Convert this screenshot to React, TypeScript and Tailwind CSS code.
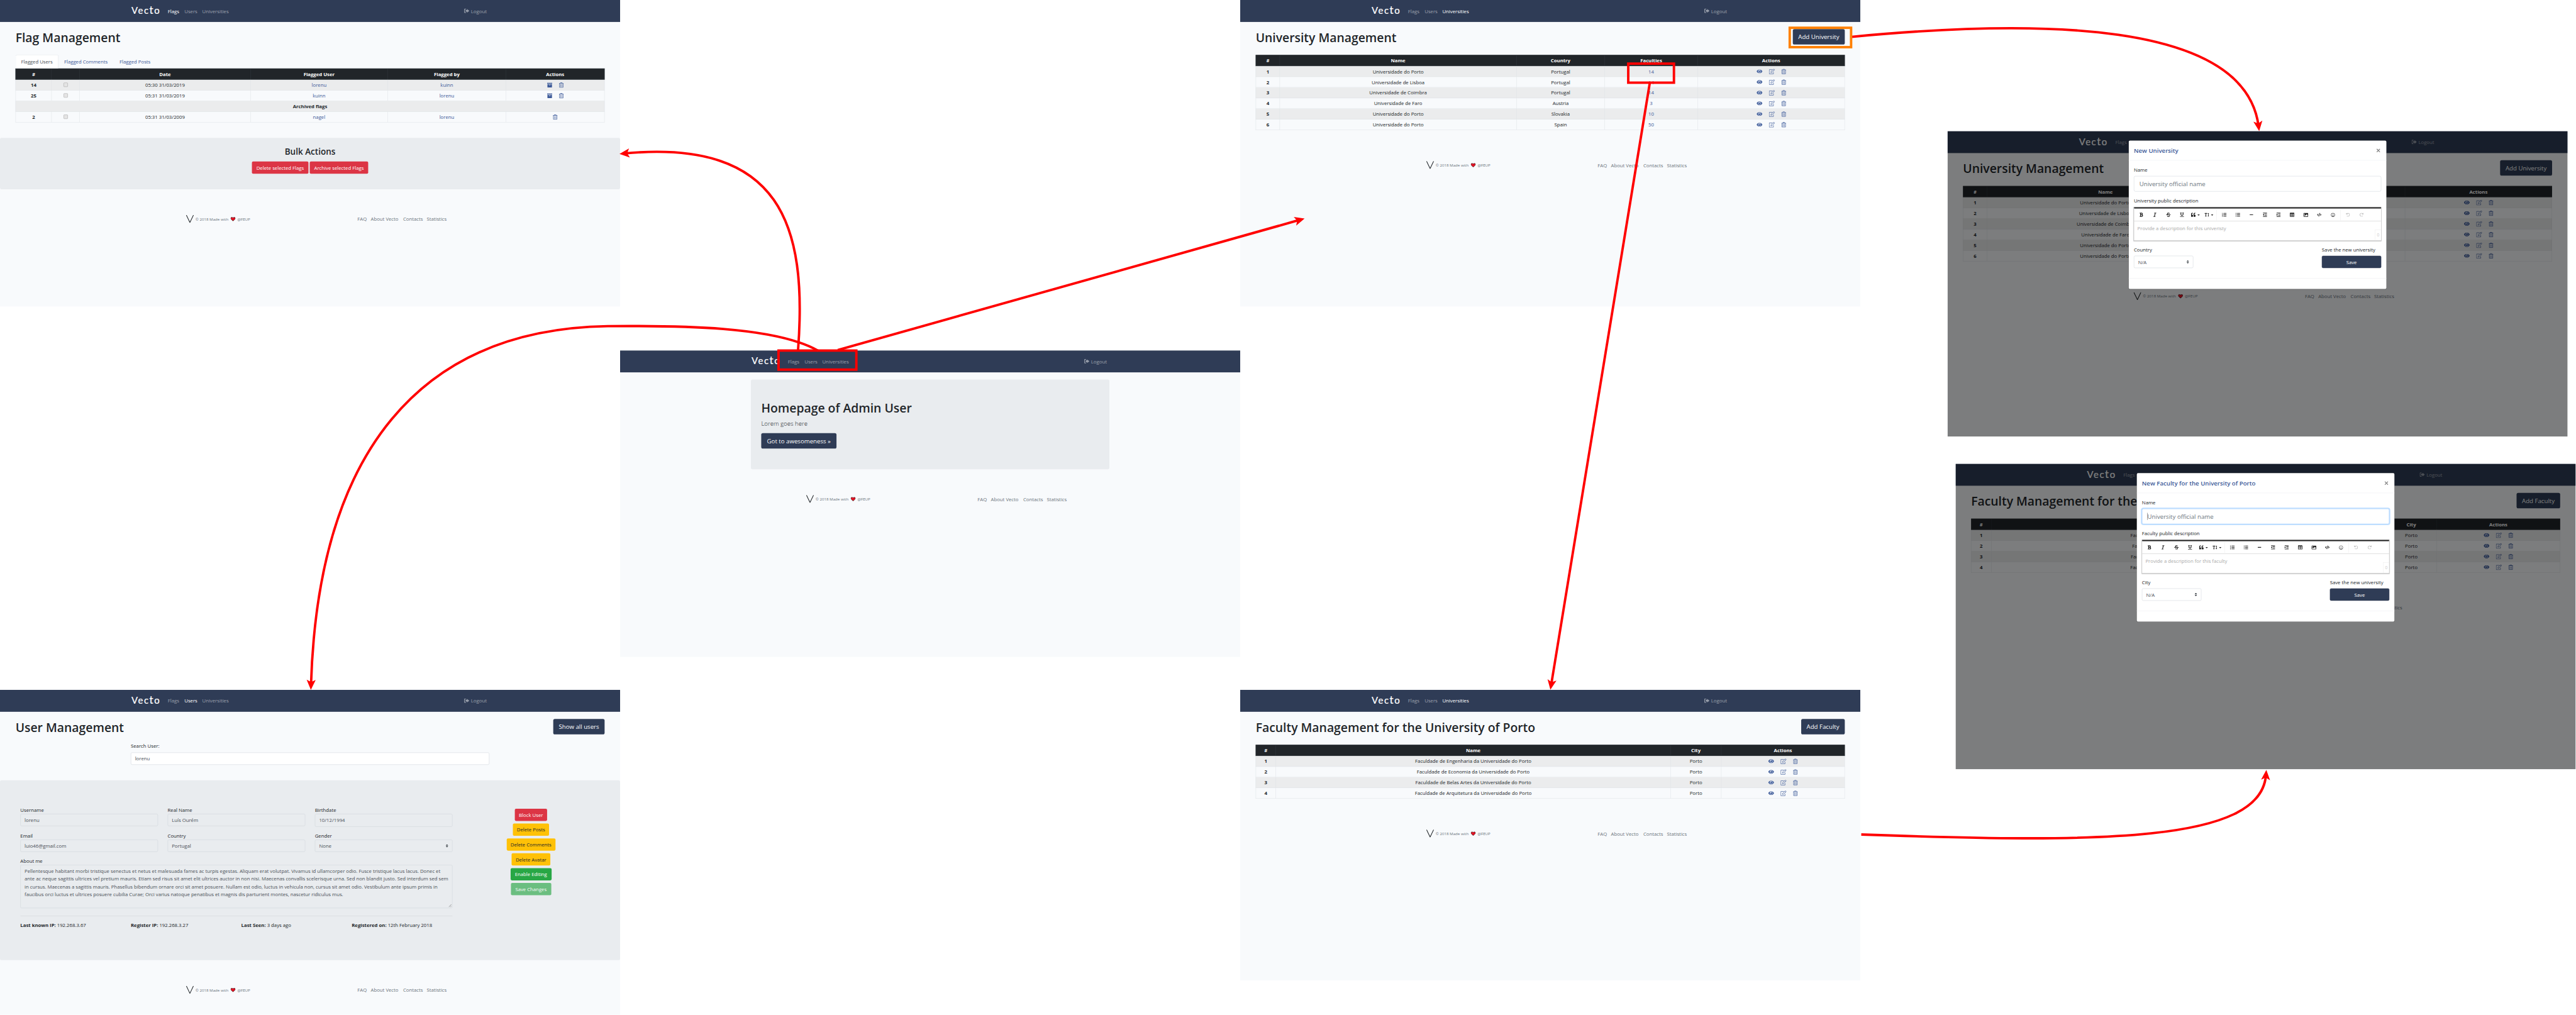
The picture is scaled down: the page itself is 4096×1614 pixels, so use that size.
import React, { type ReactNode } from "react";
import {
  FaBold,
  FaItalic,
  FaStrikethrough,
  FaUnderline,
  FaQuoteLeft,
  FaTextHeight,
  FaListOl,
  FaListUl,
  FaMinus,
  FaOutdent,
  FaIndent,
  FaTable,
  FaImage,
  FaCode,
  FaRegSmile,
  FaUndo,
  FaRedo,
  FaCaretDown,
} from "react-icons/fa";

/* ---------- icons ---------- */

function EyeIcon() {
  return (
    <svg width="18" height="12" viewBox="0 0 18 12" fill="none">
      <path d="M0 6C2 2 5.200 0 9 0s7 2 9 6c-2 4-5.200 6-9 6S2 10 0 6z" fill="#3b5998" />
      <circle cx="9" cy="6" r="4.100" stroke="#fff" strokeWidth="1.200" />
      <circle cx="7.900" cy="4.600" r="1.300" fill="#fff" />
    </svg>
  );
}

function EditIcon() {
  return (
    <svg width="19" height="17" viewBox="0 0 19 17" fill="none" stroke="#3b5998" strokeWidth="1.300">
      <path d="M10.500 2.600H1v13.300h13V10" />
      <path d="M6.200 11.800l.5-3.600 7.500-7.100c.8-.7 1.800-.6 2.600.2s.8 1.800.1 2.500l-7.200 7.200z" />
      <path d="M13 2.500l2.600 2.600" />
    </svg>
  );
}

function TrashIcon() {
  return (
    <svg width="14" height="17" viewBox="0 0 14 17" fill="none" stroke="#3b5998">
      <path d="M4.500 2.500V1h5v1.500" strokeWidth="1.500" />
      <path d="M0 3.500h14" strokeWidth="1.600" />
      <path d="M1.500 3.500v12h11v-12" strokeWidth="1.500" />
      <path d="M5 6v7.500M9 6v7.500" strokeWidth="1.300" />
    </svg>
  );
}

function ArchiveIcon() {
  return (
    <svg width="16" height="15" viewBox="0 0 16 15" fill="#3b5998">
      <path d="M0 0h16v3.500H0z" />
      <path fillRule="evenodd" d="M1 4.800h14V15H1zM5.500 6.500V8h5V6.500z" />
    </svg>
  );
}

function LogoutIcon() {
  return (
    <svg width="16" height="14" viewBox="0 0 16 14" fill="currentColor">
      <path d="M6 0H2.500C1 0 0 1 0 2.500v8C0 12 1 13 2.500 13H6v-2H2.800c-.5 0-.8-.3-.8-.8V2.800c0-.5.3-.8.8-.8H6z" />
      <path d="M4.500 4H9V.8l7 5.700-7 5.700V9H4.500z" />
    </svg>
  );
}

function HeartIcon() {
  return (
    <svg width="15" height="13" viewBox="0 0 15 13">
      <path
        d="M7.500 12.300L1.400 6.600C.2 5.200.4 2.600 1.700 1.500c1.700-1.300 4-.9 5.800 1 1.800-1.900 4.100-2.300 5.800-1 1.300 1.100 1.500 3.700.3 5.100z"
        fill="#e81123"
        stroke="#111"
        strokeWidth="1.200"
      />
      <path d="M3 3.200l1.500 2" stroke="#f4707c" strokeWidth="1" />
    </svg>
  );
}

function SortIcon() {
  return (
    <svg width="8" height="10" viewBox="0 0 8 10" fill="#343a40">
      <path d="M0 4l4-4 4 4zM0 6h8l-4 4z" />
    </svg>
  );
}

/* ---------- page chrome ---------- */

type Section = "Flags" | "Users" | "Universities" | null;

function NavBar({ active }: { active: Section }) {
  const on = "text-white";
  const off = "text-white/50";
  return (
    <nav className="h-[68px] bg-[#2f3c56]">
      <div className="mx-auto flex h-full w-[1110px] items-center">
        <div className="flex h-[68px] w-[114.500px] items-baseline pl-0.5 pt-2 font-[Lato] text-[29px] leading-[44px] tracking-[3px] text-white [-webkit-text-stroke:0.4px_white]">
          Vec<span className="text-[33px] leading-[44px]">t</span>o
        </div>
        <div className={`w-[51.500px] ${active === "Flags" ? on : off}`}>Flags</div>
        <div className={`w-[55px] ${active === "Users" ? on : off}`}>Users</div>
        <div className={active === "Universities" ? on : off}>Universities</div>
        <div className="ml-auto mr-2 flex items-center gap-[5px] text-white/50">
          <LogoutIcon />
          Logout
        </div>
      </div>
    </nav>
  );
}

function Footer({ className }: { className: string }) {
  return (
    <footer className={`flex h-6 pl-[576px] text-[#6c757d] ${className}`}>
      <div className="flex w-[530.500px] items-center text-[12px]">
        <svg width="24" height="24" viewBox="0 0 24 24" fill="none" stroke="#212529" strokeWidth="2">
          <path d="M1 0l11 23L23 0" />
        </svg>
        <span className="ml-[5px] w-[109px] pt-0.5">© 2018 Made with</span>
        <HeartIcon />
        <span className="pl-1.5 pt-0.5">@FEUP</span>
      </div>
      <span className="w-[41.500px]">FAQ</span>
      <span className="w-[100px]">About Vecto</span>
      <span className="w-[73px]">Contacts</span>
      <span>Statistics</span>
    </footer>
  );
}

function Screen({
  place,
  active,
  dialog,
  children,
}: {
  place: string;
  active: Section;
  dialog?: ReactNode;
  children: ReactNode;
}) {
  return (
    <section className={`absolute w-[1920px] overflow-hidden bg-[#f8fafc] ${place}`}>
      <NavBar active={active} />
      {children}
      {dialog && <div className="absolute inset-0 bg-black/50 pt-7">{dialog}</div>}
    </section>
  );
}

function TitleRow({ title, action }: { title: string; action?: string }) {
  return (
    <div className="mx-12 flex h-[102px] items-start justify-between pt-[22px]">
      <h1 className="pt-0.5 text-[37.700px] font-semibold leading-[48px]">{title}</h1>
      {action && (
        <button className="h-12 rounded-[5px] bg-[#2f3c56] px-[17px] text-[18.800px] text-white">{action}</button>
      )}
    </div>
  );
}

/* ---------- tables ---------- */

type Column = { label: string; width: string };

function HeadRow({ columns }: { columns: Column[] }) {
  return (
    <div className="flex h-[35px] border border-b-2 border-[#32383e] bg-[#212529] font-bold text-white">
      {columns.map((c, i) => (
        <div
          key={i}
          className={`flex items-center justify-center border-[#32383e] ${c.width} ${i < columns.length - 1 ? "border-r" : ""}`}
        >
          {c.label}
        </div>
      ))}
    </div>
  );
}

function BodyRow({ columns, cells, striped }: { columns: Column[]; cells: ReactNode[]; striped: boolean }) {
  return (
    <div className={`flex h-[33px] border-x border-b border-[#dee2e6] ${striped ? "bg-[#ebeced]" : ""}`}>
      {cells.map((cell, i) => (
        <div
          key={i}
          className={`flex items-center justify-center border-[#dee2e6] ${columns[i].width} ${
            i < cells.length - 1 ? "border-r" : ""
          } ${i === 0 ? "font-bold" : ""}`}
        >
          {cell}
        </div>
      ))}
    </div>
  );
}

function RowActions() {
  return (
    <div className="flex items-center gap-5">
      <EyeIcon />
      <EditIcon />
      <TrashIcon />
    </div>
  );
}

const flagColumns: Column[] = [
  { label: "#", width: "w-[111px]" },
  { label: "", width: "w-[87px]" },
  { label: "Date", width: "w-[529px]" },
  { label: "Flagged User", width: "w-[425px]" },
  { label: "Flagged by", width: "w-[366px]" },
  { label: "Actions", width: "w-[304px]" },
];

const universityColumns: Column[] = [
  { label: "#", width: "w-[74px]" },
  { label: "Name", width: "w-[733px]" },
  { label: "Country", width: "w-[273px]" },
  { label: "Faculties", width: "w-[288px]" },
  { label: "Actions", width: "w-[454px]" },
];

const universities = [
  ["Universidade do Porto", "Portugal", "14"],
  ["Universidade de Lisboa", "Portugal", "14"],
  ["Universidade de Coimbra", "Portugal", "14"],
  ["Universidade de Faro", "Austria", "3"],
  ["Universidade do Porto", "Slovakia", "10"],
  ["Universidade do Porto", "Spain", "50"],
];

const facultyColumns: Column[] = [
  { label: "#", width: "w-[62px]" },
  { label: "Name", width: "w-[1222px]" },
  { label: "City", width: "w-[157px]" },
  { label: "Actions", width: "w-[381px]" },
];

const faculties = [
  "Faculdade de Engenharia da Universidade do Porto",
  "Faculdade de Economia da Universidade do Porto",
  "Faculdade de Belas Artes da Universidade do Porto",
  "Faculdade de Arquitetura da Universidade do Porto",
];

/* ---------- screens ---------- */

function Checkbox() {
  return <span className="mb-0.5 block size-[13px] rounded-[2px] border border-[#a0a0a0] bg-[#e4e4e4]" />;
}

function LinkText({ children }: { children: ReactNode }) {
  return <span className="text-[#3b5998]">{children}</span>;
}

function FlagManagement() {
  const flagActions = (
    <div className="flex items-center gap-[21px]">
      <ArchiveIcon />
      <TrashIcon />
    </div>
  );
  return (
    <Screen place="left-0 top-0 h-[949px]" active="Flags">
      <TitleRow title="Flag Management" />
      <div className="mx-12">
        <div className="flex h-[42px] text-[#3b5998]">
          <div className="w-[133px] rounded-t border border-b-0 border-[#dee2e6] bg-white pl-4 pt-2 text-[#495057]">
            Flagged Users
          </div>
          <div className="w-[171.500px] border-b border-[#dee2e6] pl-[17.500px] pt-[9px]">Flagged Comments</div>
          <div className="grow border-b border-[#dee2e6] pl-[17.500px] pt-[9px]">Flagged Posts</div>
        </div>
        <HeadRow columns={flagColumns} />
        <BodyRow
          striped
          columns={flagColumns}
          cells={["14", <Checkbox />, "05:30 31/03/2019", <LinkText>lorenu</LinkText>, <LinkText>kuinn</LinkText>, flagActions]}
        />
        <BodyRow
          striped={false}
          columns={flagColumns}
          cells={["25", <Checkbox />, "05:31 31/03/2019", <LinkText>kuinn</LinkText>, <LinkText>lorenu</LinkText>, flagActions]}
        />
        <BodyRow striped columns={[{ label: "", width: "w-full" }]} cells={["Archived flags"]} />
        <BodyRow
          striped={false}
          columns={flagColumns}
          cells={["2", <Checkbox />, "05:31 31/03/2009", <LinkText>nagel</LinkText>, <LinkText>lorenu</LinkText>, <TrashIcon />]}
        />
      </div>
      <div className="mt-12 h-[159px] rounded-[5px] bg-[#e9ecef] pt-[25px] text-center">
        <h3 className="text-[26.300px] font-semibold leading-[34px]">Bulk Actions</h3>
        <div className="mt-[14px] flex justify-center gap-1 text-white">
          <button className="h-[38px] w-[175px] rounded bg-[#dc3545]">Delete selected Flags</button>
          <button className="h-[38px] w-[181px] rounded bg-[#dc3545]">Archive selected Flags</button>
        </div>
      </div>
      <Footer className="mt-20" />
    </Screen>
  );
}

function HomePage() {
  return (
    <Screen place="left-[1920px] top-[1085px] h-[949px]" active={null}>
      <div className="mx-auto mt-[22px] h-[278px] w-[1110px] rounded-[5px] bg-[#e9ecef] px-8 pt-[65px]">
        <h1 className="text-[37.700px] font-semibold leading-[48px]">Homepage of Admin User</h1>
        <p className="mt-2 text-[18.800px] font-light leading-[30px]">Lorem goes here</p>
        <button className="mt-[15px] h-12 w-[233px] rounded-[5px] bg-[#2f3c56] text-[18.800px] text-white">
          Got to awesomeness »
        </button>
      </div>
      <Footer className="mt-20" />
    </Screen>
  );
}

const inputBox = "flex items-center rounded border border-[#ced4da] px-3 text-[#495057]";

function Field({ label, value, size, select }: { label: string; value: string; size: string; select?: boolean }) {
  return (
    <div className="w-[426px]">
      <div>{label}</div>
      <div className={`${inputBox} ${size} ${select ? "justify-between text-[#6c757d]" : ""}`}>
        {value}
        {select && <SortIcon />}
      </div>
    </div>
  );
}

const about = [
  "Pellentesque habitant morbi tristique senectus et netus et malesuada fames ac turpis egestas. Aliquam erat volutpat. Vivamus id ullamcorper odio. Fusce tristique lacus lacus. Donec et",
  "ante ac neque sagittis ultrices vel pretium mauris. Etiam sed risus sit amet elit ultrices auctor in non nisi. Maecenas convallis scelerisque urna. Sed non blandit justo. Sed interdum sed sem",
  "in cursus. Maecenas a sagittis mauris. Phasellus bibendum ornare orci sit amet posuere. Nullam est odio, luctus in vehicula non, cursus sit amet odio. Vestibulum ante ipsum primis in",
  "faucibus orci luctus et ultrices posuere cubilia Curae; Orci varius natoque penatibus et magnis dis parturient montes, nascetur ridiculus mus.",
];

const facts = [
  ["Last known IP:", "192.268.3.67"],
  ["Register IP:", "192.268.3.27"],
  ["Last Seen:", "3 days ago"],
  ["Registered on:", "12th February 2018"],
];

const userActions = [
  ["Block User", "w-[100px] bg-[#dc3545] text-white"],
  ["Delete Posts", "w-[112px] bg-[#ffc107]"],
  ["Delete Comments", "w-[151px] bg-[#ffc107]"],
  ["Delete Avatar", "w-[120px] bg-[#ffc107]"],
  ["Enable Editing", "w-[127px] bg-[#28a745] text-white"],
  ["Save Changes", "w-[125px] bg-[#28a745] text-white opacity-65"],
];

function UserManagement() {
  return (
    <Screen place="left-0 top-[2136px] h-[1006px]" active="Users">
      <TitleRow title="User Management" action="Show all users" />
      <div className="mx-auto -mt-2 h-[118px] w-[1110px]">
        <div className="h-8">Search User:</div>
        <div className={`h-[38px] bg-white ${inputBox}`}>lorenu</div>
      </div>
      <div className="flex h-[557px] rounded-[5px] bg-[#e9ecef] pl-[63px] pt-20">
        <div className="w-[1338px]">
          <div className="flex h-20 gap-[30px]">
            <Field label="Username" value="lorenu" size="h-[38px]" />
            <Field label="Real Name" value="Luís Ourém" size="h-[38px]" />
            <Field label="Birthdate" value="10/12/1994" size="h-10" />
          </div>
          <div className="flex h-[78px] gap-[30px]">
            <Field label="Email" value="luio46@gmail.com" size="h-[38px]" />
            <Field label="Country" value="Portugal" size="h-[38px]" />
            <Field label="Gender" value="None" size="h-[38px]" select />
          </div>
          <div>About me</div>
          <div className="relative h-[134px] rounded border border-[#ced4da] px-3 py-1.5 text-[#495057]">
            {about.map((line) => (
              <div key={line} className="whitespace-nowrap">
                {line}
              </div>
            ))}
            <svg className="absolute bottom-0.5 right-0.5" width="9" height="9" stroke="#555" strokeWidth="1">
              <path d="M0 9l9-9M5 9l4-4" />
            </svg>
          </div>
          <div className="mt-6 border-t border-[#d0d3d6]" />
          <div className="mt-4 flex">
            {facts.map(([k, v]) => (
              <div key={k} className="w-[342px] shrink-0">
                <b>{k}</b> {v}
              </div>
            ))}
          </div>
        </div>
        <div className="ml-[143px] flex w-[200px] flex-col items-center gap-2 pt-2">
          {userActions.map(([label, look]) => (
            <button key={label} className={`h-[38px] shrink-0 rounded ${look}`}>
              {label}
            </button>
          ))}
        </div>
      </div>
      <Footer className="mt-20" />
    </Screen>
  );
}

function UniversityManagement({ place, dialog }: { place: string; dialog?: ReactNode }) {
  return (
    <Screen place={place} active="Universities" dialog={dialog}>
      <TitleRow title="University Management" action="Add University" />
      <div className="mx-12">
        <HeadRow columns={universityColumns} />
        {universities.map(([name, country, count], i) => (
          <BodyRow
            key={i}
            striped={i % 2 === 0}
            columns={universityColumns}
            cells={[i + 1, name, country, <LinkText>{count}</LinkText>, <RowActions />]}
          />
        ))}
      </div>
      <Footer className="mt-24" />
    </Screen>
  );
}

function FacultyManagement({ place, dialog }: { place: string; dialog?: ReactNode }) {
  return (
    <Screen place={place} active="Universities" dialog={dialog}>
      <TitleRow title="Faculty Management for the University of Porto" action="Add Faculty" />
      <div className="mx-12">
        <HeadRow columns={facultyColumns} />
        {faculties.map((name, i) => (
          <BodyRow
            key={name}
            striped={i % 2 === 0}
            columns={facultyColumns}
            cells={[i + 1, name, "Porto", <RowActions />]}
          />
        ))}
      </div>
      <Footer className="mt-24" />
    </Screen>
  );
}

/* ---------- dialog ---------- */

function Tool({ children, menu, faded }: { children: ReactNode; menu?: boolean; faded?: boolean }) {
  return (
    <div
      className={`flex h-[38px] w-[42px] items-center justify-center text-[14px] ${faded ? "text-[#bdbdbd]" : "text-[#222]"}`}
    >
      {children}
      {menu && <FaCaretDown className="ml-1 text-[11px]" />}
    </div>
  );
}

function ToolSeparator() {
  return <div className="mx-0.5 h-[34px] w-px bg-[#ebebeb]" />;
}

function Editor({ placeholder }: { placeholder: string }) {
  return (
    <div className="h-[104px] rounded-[2px] border border-t-[5px] border-[#ccc] border-t-[#222] bg-white shadow-[0_1px_2px_rgba(0,0,0,0.2)]">
      <div className="flex h-[39px] items-center border-b border-[#c4c4c4] pl-px shadow-[0_1px_1px_rgba(0,0,0,0.16)]">
        <Tool><FaBold /></Tool>
        <Tool><FaItalic /></Tool>
        <Tool><FaStrikethrough /></Tool>
        <Tool><FaUnderline /></Tool>
        <Tool menu><FaQuoteLeft /></Tool>
        <Tool menu><FaTextHeight /></Tool>
        <ToolSeparator />
        <Tool><FaListOl /></Tool>
        <Tool><FaListUl /></Tool>
        <Tool><FaMinus className="text-[12px]" /></Tool>
        <Tool><FaOutdent /></Tool>
        <Tool><FaIndent /></Tool>
        <Tool><FaTable /></Tool>
        <Tool><FaImage className="text-[15px]" /></Tool>
        <Tool><FaCode /></Tool>
        <Tool><FaRegSmile className="text-[13px]" /></Tool>
        <ToolSeparator />
        <Tool faded><FaUndo className="text-[12px]" /></Tool>
        <Tool faded><FaRedo className="text-[12px]" /></Tool>
      </div>
      <div className="flex h-[59px] items-start justify-between">
        <span className="pl-2.5 pt-2.5 text-[#aaa]">{placeholder}</span>
        <span className="mt-[26px] flex h-[33px] w-[18px] items-center justify-center border-l border-t border-[#ebebeb] text-[13px] text-[#ccc]">
          0
        </span>
      </div>
    </div>
  );
}

function CreateDialog({
  title,
  subject,
  placeholder,
  region,
  focused,
}: {
  title: string;
  subject: string;
  placeholder: string;
  region: string;
  focused?: boolean;
}) {
  return (
    <div className="mx-auto h-[462px] w-[800px] rounded-[5px] border border-black/20 bg-white bg-clip-padding">
      <div className="flex h-[62px] items-start justify-between border-b border-[#e9ecef] px-4 pt-4">
        <h5 className="text-[18.800px] font-semibold leading-[30px] text-[#3b5998]">{title}</h5>
        <svg className="mr-[3px] mt-[9px]" width="12" height="12" stroke="#7f7f7f" strokeWidth="2.400">
          <path d="M1 1l10 10M11 1L1 11" />
        </svg>
      </div>
      <div className="h-[365px] border-b border-[#e9ecef] px-4 pt-[17px]">
        <div className="h-[31px]">Name</div>
        <div
          className={`flex h-12 items-center rounded-[5px] border px-4 text-[18.800px] text-[#6c757d] ${
            focused ? "border-[#80bdff] shadow-[0_0_0_3px_#bfdeff]" : "border-[#ced4da]"
          }`}
        >
          {focused && <span className="-ml-px h-[22px] w-px bg-[#495057]" />}
          University official name
        </div>
        <div className="mt-4 h-8">{subject} public description</div>
        <Editor placeholder={placeholder} />
        <div className="mt-4 flex justify-between">
          <div className="w-[184px]">
            <div className="h-[31px]">{region}</div>
            <div className={`h-[38px] justify-between ${inputBox}`}>
              N/A
              <SortIcon />
            </div>
          </div>
          <div className="w-[184px]">
            <div className="h-[31px]">Save the new university</div>
            <button className="h-[38px] w-full rounded border border-[#28324a] bg-[#2f3c56] text-white">Save</button>
          </div>
        </div>
      </div>
    </div>
  );
}

/* ---------- connections between screens ---------- */

const routes = [
  "M2471 1084C2500 700 2420 430 1934 475",
  "M2533 1086C2400 1010 2100 1008 1882 1010C1300 1019 985 1400 963 2120",
  "M2594 1084L4024 681",
  "M5108 258L4803 2120",
  "M5733 114C6300 60 6950 60 6993 390",
  "M5763 2584C6500 2610 7000 2610 7016 2400",
];

function Connections() {
  return (
    <svg className="absolute inset-0" width="7976" height="3142" viewBox="0 0 7976 3142" fill="none">
      <defs>
        <marker id="head" markerUnits="userSpaceOnUse" markerWidth="40" markerHeight="40" refX="16" refY="16" orient="auto">
          <path d="M32 16L1 2l7 14-7 14z" fill="#f00" />
        </marker>
      </defs>
      <g stroke="#f00" strokeWidth="7.500">
        {routes.map((d) => (
          <path key={d} d={d} markerEnd="url(#head)" />
        ))}
      </g>
      <rect x="2410.500" y="1085.500" width="241" height="59" stroke="#f00" strokeWidth="7.500" />
      <rect x="5041.500" y="197" width="141.500" height="59" stroke="#f00" strokeWidth="7.500" />
      <rect x="5541.500" y="86" width="190" height="60" stroke="#ff8000" strokeWidth="7.500" />
    </svg>
  );
}

export default function App() {
  return (
    <div className="h-[1614px] w-[4096px] overflow-hidden bg-white">
      <div className="relative h-[3142px] w-[7976px] origin-top-left scale-[0.51354] bg-white font-['Open_Sans',sans-serif] text-[15.100px] leading-6 text-[#212529]">
        <FlagManagement />
        <HomePage />
        <UserManagement />
        <UniversityManagement place="left-[3840px] top-0 h-[949px]" />
        <FacultyManagement place="left-[3840px] top-[2136px] h-[900px]" />
        <UniversityManagement
          place="left-[6030px] top-[406px] h-[946px]"
          dialog={
            <CreateDialog
              title="New University"
              subject="University"
              placeholder="Provide a description for this univeristy"
              region="Country"
            />
          }
        />
        <FacultyManagement
          place="left-[6055px] top-[1436px] h-[946px]"
          dialog={
            <CreateDialog
              title="New Faculty for the University of Porto"
              subject="Faculty"
              placeholder="Provide a description for this faculty"
              region="City"
              focused
            />
          }
        />
        <Connections />
      </div>
    </div>
  );
}
